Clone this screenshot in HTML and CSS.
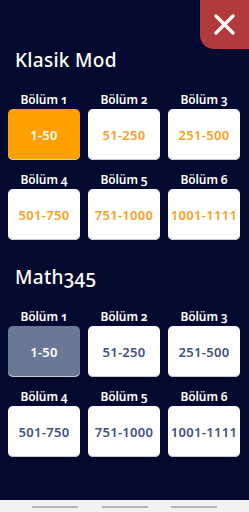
FILE: index.html
```html
<!DOCTYPE html>
<html lang="tr">

<head>
    <meta charset="UTF-8">
    <meta name="viewport" content="width=device-width, initial-scale=1.0">
    <title>Bölümler</title>
    <link rel="stylesheet" href="styles.css">
</head>

<body>
    <button class="close" aria-label="Kapat">
        <svg width="21" height="21" viewBox="0 0 21 21">
            <path d="M2 2 L19 19 M19 2 L2 19" stroke="#fff" stroke-width="3.2" stroke-linecap="round" fill="none" />
        </svg>
    </button>

    <main>
        <section class="mode classic">
            <h2>Klasik Mod</h2>
            <div class="levels">
                <div class="level"><b>Bölüm 1</b><div class="card active">1-50</div></div>
                <div class="level"><b>Bölüm 2</b><div class="card">51-250</div></div>
                <div class="level"><b>Bölüm 3</b><div class="card">251-500</div></div>
                <div class="level"><b>Bölüm 4</b><div class="card">501-750</div></div>
                <div class="level"><b>Bölüm 5</b><div class="card">751-1000</div></div>
                <div class="level"><b>Bölüm 6</b><div class="card">1001-1111</div></div>
            </div>
        </section>

        <section class="mode math">
            <h2>Math345</h2>
            <div class="levels">
                <div class="level"><b>Bölüm 1</b><div class="card active">1-50</div></div>
                <div class="level"><b>Bölüm 2</b><div class="card">51-250</div></div>
                <div class="level"><b>Bölüm 3</b><div class="card">251-500</div></div>
                <div class="level"><b>Bölüm 4</b><div class="card">501-750</div></div>
                <div class="level"><b>Bölüm 5</b><div class="card">751-1000</div></div>
                <div class="level"><b>Bölüm 6</b><div class="card">1001-1111</div></div>
            </div>
        </section>
    </main>

    <footer class="navbar">
        <span></span>
        <span></span>
        <span></span>
    </footer>
</body>

</html>
```

FILE: styles.css
```css
body {
    margin: 0;
    height: 512px;
    display: flex;
    flex-direction: column;
    background-color: #040a2f;
    color: #fff;
    font-family: "Noto Sans", "Open Sans", sans-serif;
    font-variant-numeric: oldstyle-nums;
    position: relative;
    overflow: hidden;
}

.close {
    position: absolute;
    top: 0;
    right: 0;
    width: 49px;
    height: 49px;
    border: none;
    padding: 0;
    background-color: #b03a3c;
    border-bottom-left-radius: 14px;
    display: flex;
    align-items: center;
    justify-content: center;
}

main {
    flex: 1;
    padding: 0 9px 0 8px;
}

.mode h2 {
    margin: 0 0 20px 7px;
    font-size: 19px;
    font-weight: 500;
    line-height: 24px;
    letter-spacing: 0.3px;
}

.classic {
    margin-top: 48px;
}

.math {
    margin-top: 25px;
}

.levels {
    display: grid;
    grid-template-columns: repeat(3, 72px);
    column-gap: 8px;
    row-gap: 12px;
}

.level {
    display: flex;
    flex-direction: column;
    align-items: center;
}

.level b {
    font-size: 12px;
    font-weight: 600;
    line-height: 16px;
    letter-spacing: -0.1px;
    margin-bottom: 1px;
}

.card {
    width: 100%;
    height: 51px;
    border-radius: 5px;
    background-color: #fff;
    display: flex;
    align-items: center;
    justify-content: center;
    font-size: 13px;
    font-weight: 600;
    letter-spacing: 0.3px;
    font-variant-numeric: lining-nums;
    box-shadow: inset 0 -1px 0 #c9c9c9;
}

.classic .card {
    color: #f8a01c;
}

.classic .card.active {
    background-color: #ffa000;
    color: #fff;
}

.math .card {
    color: #3f5182;
}

.math .card.active {
    background-color: #6a7795;
    color: #fff;
}

.navbar {
    height: 12px;
    background-color: #f1f1f1;
    display: flex;
    justify-content: space-between;
    padding: 6px 32px 0 32px;
    box-sizing: border-box;
}

.navbar span {
    width: 46px;
    height: 2px;
    background-color: #b4b4b4;
}
```
